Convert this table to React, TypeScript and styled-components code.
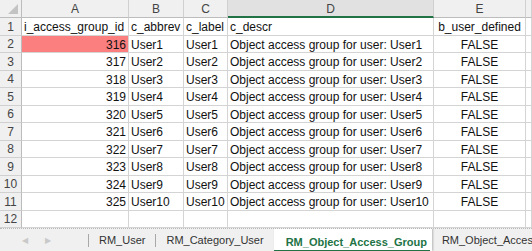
import React from "react";
import styled, { createGlobalStyle } from "styled-components";

const Global = createGlobalStyle`
  html, body { margin: 0; padding: 0; background: #ffffff; }
  body { width: 532px; height: 251px; overflow: hidden; font-family: "Liberation Sans", Arial, sans-serif; }
`;

const COLS = "22px 107px 55px 44px 206px 92px 1fr";

const Frame = styled.div`
  width: 532px;
  height: 251px;
  display: flex;
  flex-direction: column;
  overflow: hidden;
  background: #fff;
`;

const Sheet = styled.div`
  display: flex;
  flex-direction: column;
  flex: 0 0 auto;
`;

const Row = styled.div<{ $h: number }>`
  display: grid;
  grid-template-columns: ${COLS};
  height: ${(p) => p.$h}px;
`;

const Corner = styled.div`
  position: relative;
  background: #f0f0f0;
  border-right: 1px solid #bcbcbc;
  border-bottom: 1px solid #bcbcbc;
  &::after {
    content: "";
    position: absolute;
    right: 3px;
    bottom: 3px;
    width: 0;
    height: 0;
    border-left: 10px solid transparent;
    border-bottom: 10px solid #c3c3c3;
  }
`;

const ColHead = styled.div<{ $sel?: boolean }>`
  display: flex;
  align-items: center;
  justify-content: center;
  background: ${(p) => (p.$sel ? "#e1e1e1" : "#f0f0f0")};
  border-right: 1px solid #d0d0d0;
  border-bottom: ${(p) => (p.$sel ? "2px solid #217346" : "1px solid #bcbcbc")};
  color: #444;
  font-size: 12px;
  box-sizing: border-box;
  padding-top: ${(p) => (p.$sel ? "1px" : "0")};
`;

const RowHead = styled.div`
  display: flex;
  align-items: center;
  justify-content: center;
  background: #f0f0f0;
  border-right: 1px solid #bcbcbc;
  border-bottom: 1px solid #d0d0d0;
  color: #444;
  font-size: 12px;
  box-sizing: border-box;
`;

const Cell = styled.div<{ $align?: "left" | "right" | "center"; $fill?: string }>`
  display: flex;
  align-items: center;
  justify-content: ${(p) =>
    p.$align === "right" ? "flex-end" : p.$align === "center" ? "center" : "flex-start"};
  padding: 1px 2px 0 2px;
  box-sizing: border-box;
  border-right: 1px solid #d4d4d4;
  border-bottom: 1px solid #d4d4d4;
  background: ${(p) => p.$fill || "#fff"};
  color: #111;
  font-size: 12px;
  white-space: nowrap;
  overflow: visible;
`;

const TabBar = styled.div`
  flex: 1 1 auto;
  display: flex;
  align-items: stretch;
  background: #f0f0f0;
  border-top: 1px dotted #b9b9b9;
  box-sizing: border-box;
  white-space: nowrap;
  overflow: hidden;
`;

const Nav = styled.div`
  flex: 0 0 88px;
  display: flex;
  align-items: center;
  gap: 17px;
  padding-left: 22px;
  box-sizing: border-box;
  color: #c9c9c9;
  font-size: 8px;
`;

const Sep = styled.div`
  flex: 0 0 1px;
  background: #a8a8a8;
  margin: 5px 0 4px;
`;

const Tab = styled.div<{ $active?: boolean }>`
  flex: 0 0 auto;
  display: flex;
  align-items: center;
  padding: 0 ${(p) => (p.$active ? "2px 0 0" : "10px")};
  margin-top: ${(p) => (p.$active ? "-1px" : "0")};
  font-size: 11px;
  color: ${(p) => (p.$active ? "#217346" : "#333")};
  font-weight: ${(p) => (p.$active ? 700 : 400)};
  background: ${(p) => (p.$active ? "#fff" : "transparent")};
  box-shadow: ${(p) => (p.$active ? "1px 0 2px rgba(0,0,0,0.25)" : "none")};
`;

const ActiveLabel = styled.span`
  padding: 0 3px 1px 12px;
  border-bottom: 2px solid #217346;
  margin-top: 8px;
  line-height: 14px;
`;

const headers = ["A", "B", "C", "D", "E"];

const data = Array.from({ length: 10 }, (_, i) => ({
  id: 316 + i,
  abbrev: `User${i + 1}`,
  label: `User${i + 1}`,
  descr: `Object access group for user: User${i + 1}`,
}));

const heights = [18, 17, 18, 17, 18, 17, 18, 17, 18, 17, 18, 17];

export default function App() {
  return (
    <Frame>
      <Global />
      <Sheet>
        <Row $h={18}>
          <Corner />
          {headers.map((h) => (
            <ColHead key={h} $sel={h === "D"}>
              {h}
            </ColHead>
          ))}
          <ColHead />
        </Row>
        <Row $h={heights[0]}>
          <RowHead>1</RowHead>
          <Cell>i_access_group_id</Cell>
          <Cell>c_abbrev</Cell>
          <Cell>c_label</Cell>
          <Cell>c_descr</Cell>
          <Cell $align="center">b_user_defined</Cell>
          <Cell />
        </Row>
        {data.map((d, i) => (
          <Row key={d.id} $h={heights[i + 1]}>
            <RowHead>{i + 2}</RowHead>
            <Cell $align="right" $fill={i === 0 ? "#fb7f7f" : undefined}>
              {d.id}
            </Cell>
            <Cell>{d.abbrev}</Cell>
            <Cell>{d.label}</Cell>
            <Cell>{d.descr}</Cell>
            <Cell $align="center">FALSE</Cell>
            <Cell />
          </Row>
        ))}
        <Row $h={17}>
          <RowHead>12</RowHead>
          <Cell />
          <Cell />
          <Cell />
          <Cell />
          <Cell />
          <Cell />
        </Row>
      </Sheet>
      <TabBar>
        <Nav>
          <span>◀</span>
          <span>▶</span>
        </Nav>
        <Sep />
        <Tab>RM_User</Tab>
        <Sep />
        <Tab>RM_Category_User</Tab>
        <Tab $active>
          <ActiveLabel>RM_Object_Access_Group</ActiveLabel>
        </Tab>
        <Tab>RM_Object_Access_Group_User</Tab>
      </TabBar>
    </Frame>
  );
}
